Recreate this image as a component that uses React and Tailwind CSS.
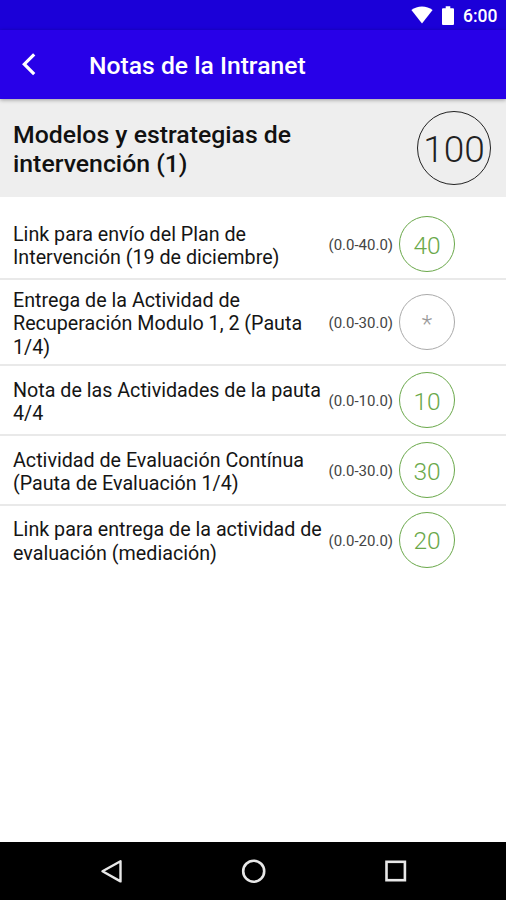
import clsx from "clsx";

// ---------------------------------------------------------------------------
// Data
// ---------------------------------------------------------------------------
const COURSE = { title: "Modelos y estrategias de\nintervención (1)", total: "100" };

const GRADES = [
  { id: 1, name: "Link para envío del Plan de\nIntervención (19 de diciembre)", range: "(0.0-40.0)", grade: "40" },
  { id: 2, name: "Entrega de la Actividad de\nRecuperación Modulo 1, 2 (Pauta\n1/4)", range: "(0.0-30.0)", grade: null },
  { id: 3, name: "Nota de las Actividades de la pauta\n4/4", range: "(0.0-10.0)", grade: "10" },
  { id: 4, name: "Actividad de Evaluación Contínua\n(Pauta de Evaluación 1/4)", range: "(0.0-30.0)", grade: "30" },
  { id: 5, name: "Link para entrega de la actividad de\nevaluación (mediación)", range: "(0.0-20.0)", grade: "20" },
];

// ---------------------------------------------------------------------------
// StatusBar
// ---------------------------------------------------------------------------
function StatusBar() {
  return (
    <div className="flex h-[30px] shrink-0 items-center justify-end bg-[#1b00d8] pr-[9px] text-white">
      <svg className="h-[18px] w-[22px]" viewBox="0 0 22 18" fill="currentColor">
        <path d="M11 17.500 0.400 4.100C3.400 1.800 7 .5 11 .5s7.600 1.300 10.600 3.600z" />
      </svg>
      <svg className="ml-[9px] h-[19px] w-[12px]" viewBox="0 0 12 19" fill="currentColor">
        <path d="M1 2.200h2.700V.2h4.600v2H11a1 1 0 0 1 1 1V18a1 1 0 0 1-1 1H1a1 1 0 0 1-1-1V3.200a1 1 0 0 1 1-1z" />
      </svg>
      <span className="ml-[9px] w-[34px] pt-[3px] text-[17.5px] leading-none font-medium whitespace-nowrap">6:00</span>
    </div>
  );
}

// ---------------------------------------------------------------------------
// AppBar
// ---------------------------------------------------------------------------
function AppBar({ title }) {
  return (
    <header className="relative flex h-[68.5px] shrink-0 items-center bg-[#2800e8] pl-[20px] text-white shadow-[0_1px_4px_rgba(0,0,0,0.35)]">
      <button className="h-[24px] w-[16px]" aria-label="Volver">
        <svg className="h-[24px] w-[16px]" viewBox="0 0 16 24" fill="none" stroke="currentColor" strokeWidth="3.200">
          <path d="M14.200 2.300 4.300 12.200l9.900 9.900" />
        </svg>
      </button>
      <h1 className="ml-[53px] pt-[5px] text-[24.7px] leading-none font-medium">{title}</h1>
    </header>
  );
}

// ---------------------------------------------------------------------------
// Grades
// ---------------------------------------------------------------------------
function CourseHeader({ title, total }) {
  return (
    <section className="flex h-[98.5px] shrink-0 items-center justify-between bg-[#eeeeee] pr-[15px] pl-[13px]">
      <h2 className="pt-[4px] text-[24.8px] leading-[28.5px] font-medium whitespace-pre text-[#111]">{title}</h2>
      <span className="grid size-[74px] place-items-center rounded-full border border-[#222] pt-[4px] text-[37px] leading-none font-light text-[#222]">
        {total}
      </span>
    </section>
  );
}

function GradeBadge({ grade }) {
  return (
    <span
      className={clsx(
        "grid size-[56px] shrink-0 place-items-center rounded-full border-[1.5px] pt-[4px] text-[24.5px] leading-none font-light",
        grade ? "border-[#6aa84a] text-[#6aa84a]" : "border-[#aaa] text-[#999]",
      )}
    >
      {grade ?? "*"}
    </span>
  );
}

function GradeRow({ name, range, grade }) {
  return (
    <li className="flex items-center border-b-2 border-[#e9e9e9] py-[5.9px] pl-[13px] last:border-transparent">
      <p className="-mb-[0.5px] w-[315.5px] shrink-0 pt-[3.500px] text-[19.7px] leading-[23.200px] whitespace-pre text-[#151515]">
        {name}
      </p>
      <span className="w-[70.5px] shrink-0 pt-[3px] text-[15px] leading-none whitespace-nowrap text-[#444]">{range}</span>
      <GradeBadge grade={grade} />
    </li>
  );
}

// ---------------------------------------------------------------------------
// NavBar (Android)
// ---------------------------------------------------------------------------
function NavBar() {
  return (
    <nav className="flex h-[58px] shrink-0 items-center justify-between bg-black pr-[97px] pl-[99px] text-[#e8e8e8]">
      <svg className="size-[26px]" viewBox="0 0 26 26" fill="none" stroke="currentColor" strokeWidth="2.400">
        <path d="M21.500 3.200v20.200L3.500 13.300z" strokeLinejoin="round" />
      </svg>
      <svg className="size-[26px]" viewBox="0 0 26 26" fill="none" stroke="currentColor" strokeWidth="2.600">
        <circle cx="12.700" cy="13.200" r="10.500" />
      </svg>
      <svg className="size-[26px]" viewBox="0 0 26 26" fill="none" stroke="currentColor" strokeWidth="2.600">
        <rect x="3.500" y="3.800" width="18.400" height="18.400" />
      </svg>
    </nav>
  );
}

export default function App() {
  return (
    <div className="flex h-[900px] w-[506px] flex-col overflow-hidden bg-white font-['Roboto',sans-serif]">
      <StatusBar />
      <AppBar title="Notas de la Intranet" />
      <CourseHeader title={COURSE.title} total={COURSE.total} />
      <ul className="flex-1 pt-[13px]">
        {GRADES.map((g) => (
          <GradeRow key={g.id} name={g.name} range={g.range} grade={g.grade} />
        ))}
      </ul>
      <NavBar />
    </div>
  );
}
